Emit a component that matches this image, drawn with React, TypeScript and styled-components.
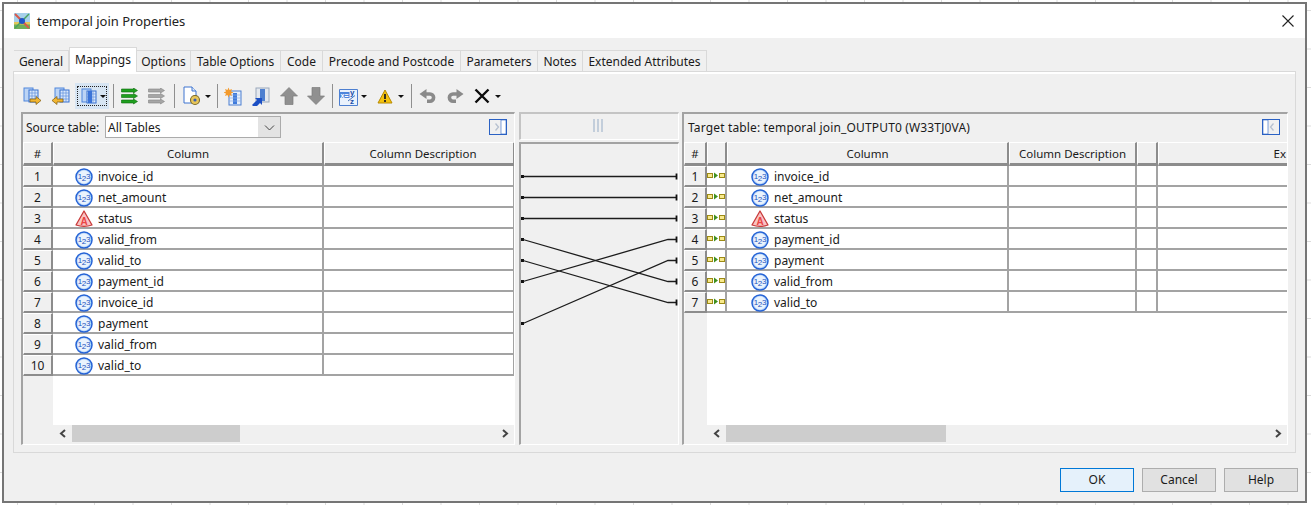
import React from "react"
import styled, { createGlobalStyle } from "styled-components"

const GlobalStyle = createGlobalStyle`
    html, body {
        margin: 0;
        padding: 0;
        background: #fff;
    }
    body {
        font-family: "Noto Sans", "Open Sans", "Liberation Sans", sans-serif;
        font-size: 12px;
        color: #1a1a1a;
        overflow: hidden;
    }
`

const Page = styled.div`
    width: 1311px;
    height: 505px;
    padding: 2px 4px 2px 2px;
    box-sizing: border-box;
    background-color: #fff;
    background-image:
        linear-gradient(to right, #dcdcdc 1px, transparent 1px),
        linear-gradient(to bottom, #dcdcdc 1px, transparent 1px);
    background-size: 38.5px 38.5px;
    background-position: 17px 10px;
`

const Dialog = styled.div`
    height: 100%;
    box-sizing: border-box;
    border: 2px solid #757575;
    display: flex;
    flex-direction: column;
    background: #f0f0f0;
`

const TitleBar = styled.div`
    height: 34px;
    background: #fff;
    display: flex;
    align-items: center;
    padding: 0 11px 0 10px;
    gap: 7px;
    flex: none;
`

const TitleText = styled.div`
    font-size: 13px;
    color: #222;
    flex: 1;
    padding-bottom: 1px;
`

const Body = styled.div`
    flex: 1;
    display: flex;
    flex-direction: column;
    padding: 9px 9px 0;
`

const TabStrip = styled.div`
    display: flex;
    align-items: flex-end;
    height: 24px;
    padding-left: 1px;
`

const Tab = styled.div<{ $active?: boolean; $w: number }>`
    width: ${(p) => p.$w}px;
    box-sizing: border-box;
    height: ${(p) => (p.$active ? 25 : 21)}px;
    margin-bottom: ${(p) => (p.$active ? -1 : 0)}px;
    padding-top: ${(p) => (p.$active ? 4 : 3)}px;
    text-align: center;
    background: ${(p) => (p.$active ? "#fff" : "#f0f0f0")};
    border: 1px solid #d9d9d9;
    border-bottom: none;
    border-left-width: ${(p) => (p.$active ? 1 : 0)}px;
    position: relative;
    z-index: ${(p) => (p.$active ? 1 : 0)};
    font-size: 12px;
    line-height: 16px;
    white-space: nowrap;
`

const TabPanel = styled.div`
    width: 1283px;
    height: 382px;
    box-sizing: border-box;
    border: 1px solid #d9d9d9;
    box-shadow: inset 0 2px 0 #fff;
    padding: 0 7px 7px;
    display: flex;
    flex-direction: column;
`

const Toolbar = styled.div`
    flex: none;
    height: 40px;
    box-sizing: border-box;
    padding-top: 8px;
    display: flex;
    align-items: center;
`

const Tool = styled.div<{ $w: number; $selected?: boolean; $l?: number }>`
    width: ${(p) => p.$w}px;
    height: 26px;
    margin-left: ${(p) => p.$l ?? 0}px;
    flex: none;
    display: flex;
    align-items: center;
    justify-content: center;
    box-sizing: border-box;
    background: ${(p) => (p.$selected ? "#d7e5f3" : "transparent")};
`

const ToolFocus = styled.div`
    width: 30px;
    height: 20px;
    border: 1px dotted #222;
    display: flex;
    align-items: center;
    gap: 3px;
    padding-left: 3px;
    box-sizing: border-box;
`

const Sep = styled.div<{ $l: number; $r: number }>`
    width: 1px;
    height: 24px;
    flex: none;
    background: #8f8f8f;
    margin: 0 ${(p) => p.$r}px 0 ${(p) => p.$l}px;
`

const Caret = styled.div`
    width: 0;
    height: 0;
    flex: none;
    border-left: 3px solid transparent;
    border-right: 3px solid transparent;
    border-top: 3px solid #111;
`

const Panes = styled.div`
    flex: 1;
    min-height: 0;
    display: flex;
    height: 333px;
`

const Pane = styled.div<{ $w: number; $r: number }>`
    width: ${(p) => p.$w}px;
    margin-right: ${(p) => p.$r}px;
    flex: none;
    box-sizing: border-box;
    border-top: 2px solid #a3a3a3;
    border-left: 2px solid #a3a3a3;
    border-right: 1px solid #fff;
    border-bottom: 1px solid #fff;
    display: flex;
    flex-direction: column;
    overflow: hidden;
`

const PaneHead = styled.div`
    height: 28px;
    flex: none;
    display: flex;
    align-items: center;
    padding: 0 7px 2px 3px;
    box-sizing: border-box;
`

const HeadLabel = styled.span`
    width: 79px;
    flex: none;
    padding-top: 1px;
    white-space: nowrap;
`

const TargetLabel = styled.span`
    flex: 1;
    padding-left: 1px;
    letter-spacing: 0.15px;
    white-space: nowrap;
`

const SelectBox = styled.div`
    width: 176px;
    height: 22px;
    box-sizing: border-box;
    background: #e3e3e3;
    border: 1px solid #ababab;
    display: flex;
    align-items: center;
    margin-right: auto;
`

const SelectValue = styled.div`
    width: 152px;
    height: 20px;
    line-height: 21px;
    background: #fff;
    padding-left: 2px;
    box-sizing: border-box;
`

const SelectArrow = styled.div`
    flex: 1;
    display: flex;
    justify-content: center;
`

const Table = styled.div`
    flex: 1;
    min-height: 0;
    display: flex;
    flex-direction: column;
`

const Row = styled.div<{ $cols: string; $h: number }>`
    display: grid;
    grid-template-columns: ${(p) => p.$cols};
    grid-template-rows: ${(p) => p.$h}px;
    height: ${(p) => p.$h}px;
    flex: none;
`

const HeadCell = styled.div<{ $shift?: number }>`
    box-sizing: border-box;
    background: #f0f0f0;
    border-top: 1px solid #fff;
    border-left: 1px solid #fff;
    border-right: 2px solid #8c8c8c;
    border-bottom: 3px solid #8c8c8c;
    padding-left: ${(p) => p.$shift ?? 0}px;
    text-align: center;
    font-size: 11.5px;
    line-height: 22px;
    white-space: nowrap;
    overflow: hidden;
`

const EndHeadCell = styled(HeadCell)`
    border-right: none;
    text-align: right;
    padding-right: 1px;
`

const NumCell = styled.div`
    box-sizing: border-box;
    background: #f0f0f0;
    border-top: 1px solid #fff;
    border-left: 1px solid #fff;
    border-right: 2px solid #8c8c8c;
    border-bottom: 2px solid #8c8c8c;
    text-align: center;
    line-height: 19px;
`

const Cell = styled.div`
    box-sizing: border-box;
    background: #fff;
    border-right: 2px solid #a3a3a3;
    border-bottom: 2px solid #a3a3a3;
`

const EndCell = styled(Cell)`
    border-right: none;
`

const NameCell = styled(Cell)<{ $pad: number }>`
    display: flex;
    align-items: center;
    gap: 5px;
    padding-left: ${(p) => p.$pad}px;
    padding-top: 2px;
`

const MarkerCell = styled(Cell)`
    display: flex;
    align-items: center;
    padding-top: 1px;
`

const RowsArea = styled.div<{ $gutter: number }>`
    flex: 1;
    min-height: 0;
    background: linear-gradient(to right, #f0f0f0 ${(p) => p.$gutter}px, #fff ${(p) => p.$gutter}px);
    display: flex;
    flex-direction: column;
`

const ScrollBar = styled.div<{ $gutter: number }>`
    height: 17px;
    flex: none;
    display: flex;
    align-items: center;
    padding-left: ${(p) => p.$gutter}px;
    margin-bottom: 2px;
`

const ScrollBtn = styled.div`
    width: 19px;
    flex: none;
    display: flex;
    justify-content: center;
`

const ScrollThumb = styled.div<{ $w: number }>`
    width: ${(p) => p.$w}px;
    height: 17px;
    background: #cdcdcd;
    flex: none;
`

const ScrollTrack = styled.div`
    flex: 1;
`

const MidColumn = styled.div`
    width: 160px;
    margin-right: 3px;
    flex: none;
    display: flex;
    flex-direction: column;
    gap: 2px;
`

const MidTop = styled.div`
    height: 28px;
    box-sizing: border-box;
    border-top: 2px solid #c4c4c4;
    border-left: 2px solid #c4c4c4;
    border-right: 1px solid #fff;
    border-bottom: 1px solid #fff;
    display: flex;
    align-items: center;
    justify-content: center;
    gap: 2px;
    padding-right: 4px;
    padding-bottom: 3px;
`

const Grip = styled.div`
    width: 2px;
    height: 13px;
    background: #c3cedb;
`

const MidBody = styled.div`
    flex: 1;
    box-sizing: border-box;
    border-top: 2px solid #a3a3a3;
    border-left: 2px solid #a3a3a3;
    border-right: 1px solid #fff;
    border-bottom: 1px solid #fff;
`

const Links = styled.svg`
    display: block;
`

const Footer = styled.div`
    flex: 1;
    display: flex;
    justify-content: flex-end;
    align-items: flex-start;
    gap: 8px;
    padding-top: 15px;
    margin-right: -2px;
`

const DialogButton = styled.div<{ $primary?: boolean }>`
    width: 74px;
    height: 24px;
    box-sizing: border-box;
    background: ${(p) => (p.$primary ? "#e5f1fb" : "#e1e1e1")};
    border: 1px solid ${(p) => (p.$primary ? "#0078d7" : "#adadad")};
    text-align: center;
    line-height: 21px;
`

const NumberIcon = () => (
    <svg width="18" height="18" viewBox="0 0 18 18">
        <circle cx="9" cy="9" r="8" fill="#b9d5f8" stroke="#2563d6" strokeWidth="1.500" />
        <circle cx="9" cy="9" r="6.400" fill="#eaf3fd" />
        <g fontSize="8" fontFamily="Liberation Sans" fill="#1c52bd" textAnchor="middle">
            <text x="5" y="11">1</text>
            <text x="9" y="13">2</text>
            <text x="13.200" y="10.500">3</text>
        </g>
    </svg>
)

const StringIcon = () => (
    <svg width="18" height="18" viewBox="0 0 18 18">
        <path d="M9 1 L17 15 Q9 17.800 1 15 Z" fill="#f9c3c3" stroke="#c93a3a" strokeWidth="1.300" strokeLinejoin="round" />
        <text x="9" y="14.500" textAnchor="middle" fontSize="10" fontWeight="bold" fontFamily="Liberation Sans" fill="#ea4545">A</text>
    </svg>
)

const AppIcon = () => (
    <svg width="16" height="16" viewBox="0 0 16 16">
        <rect x="0" y="0" width="16" height="16" fill="#a6d0ea" />
        <path d="M0 11h16v5H0z" fill="#6fae5a" />
        <path d="M0 9h16v2.500H0z" fill="#e3c75a" />
        <path d="M1 1 L15 15" stroke="#d9584a" strokeWidth="2" />
        <path d="M15 1 L1 15" stroke="#4aa35c" strokeWidth="1.500" />
        <circle cx="8" cy="8" r="3" fill="#1f55c8" />
    </svg>
)

const CloseIcon = () => (
    <svg width="12" height="12" viewBox="0 0 12 12">
        <path d="M0.500 0.500 L11.500 11.500 M11.500 0.500 L0.500 11.500" stroke="#222" strokeWidth="1.100" />
    </svg>
)

const ColumnPair = () => (
    <>
        <rect x="1" y="1" width="9" height="13" fill="#bcd4f5" stroke="#4f86dc" />
        <rect x="6" y="3" width="9" height="12" fill="#dbe8fa" stroke="#3670d0" />
        <path d="M9 3v12M12 3v12M6 6h9M6 9h9M6 12h9" stroke="#5f8fdc" strokeWidth="0.700" />
    </>
)

const ArrowRightDocIcon = () => (
    <svg width="19" height="19" viewBox="0 0 19 19">
        <ColumnPair />
        <path d="M7 12h6V9.500l5 4-5 4V15H7z" fill="#f2b632" stroke="#7c5a10" strokeWidth="0.700" />
    </svg>
)

const ArrowLeftDocIcon = () => (
    <svg width="19" height="19" viewBox="0 0 19 19">
        <g transform="translate(3 0)"><ColumnPair /></g>
        <path d="M12 12H6V9.500l-5 4 5 4V15h6z" fill="#f2b632" stroke="#7c5a10" strokeWidth="0.700" />
    </svg>
)

const ColumnsIcon = () => (
    <svg width="16" height="17" viewBox="0 0 16 17">
        <ColumnPair />
        <rect x="7" y="3" width="4" height="12" fill="#3b74d8" />
    </svg>
)

const StackArrows = ({ color, edge }: { color: string; edge: string }) => (
    <svg width="17" height="17" viewBox="0 0 17 17">
        {[1, 6.5, 12].map((y) => (
            <path key={y} d={`M0.500 ${y}h12v-1l4 2.500-4 2.500v-1h-12z`} fill={color} stroke={edge} strokeWidth="0.600" />
        ))}
    </svg>
)

const DocGearIcon = () => (
    <svg width="20" height="20" viewBox="0 0 20 20">
        <path d="M2 1h8l4 4v12H2z" fill="#fff" stroke="#3f75d0" />
        <path d="M10 1v4h4" fill="#dce8f8" stroke="#3f75d0" />
        <circle cx="13" cy="14" r="4.500" fill="#e8c65a" stroke="#7a6a2a" strokeWidth="1.100" />
        <circle cx="13" cy="14" r="1.600" fill="#3b5fb0" />
    </svg>
)

const NewColumnIcon = () => (
    <svg width="19" height="19" viewBox="0 0 19 19">
        <rect x="5" y="4" width="12" height="14" fill="#e6effb" stroke="#4d7fd0" />
        <rect x="9" y="6" width="4" height="11" fill="#3f7bdc" />
        <path d="M5 8h12M5 11h12M5 14h12" stroke="#8db0e6" strokeWidth="0.700" />
        <path d="M4.500 0.500l1 2.500 2.500-1-1 2.500 2.500 1-2.500 1 1 2.500-2.500-1-1 2.500-1-2.500-2.500 1 1-2.500-2.500-1 2.500-1-1-2.500 2.500 1z" fill="#f39a2c" />
    </svg>
)

const LinkColumnIcon = () => (
    <svg width="19" height="19" viewBox="0 0 19 19">
        <rect x="5" y="1" width="13" height="14" fill="#e4e8ee" stroke="#9aa8bb" />
        <rect x="9" y="2" width="5" height="12" fill="#4d7fd0" />
        <path d="M1 18l5-5-2-2h7v7l-2-2-5 5z" fill="#1c4fc4" />
    </svg>
)

const UpIcon = () => (
    <svg width="18" height="18" viewBox="0 0 18 18">
        <path d="M9 0.500L17.500 9H13v8.500H5V9H0.500z" fill="#909090" stroke="#7d7d7d" strokeWidth="0.700" />
    </svg>
)

const DownIcon = () => (
    <svg width="18" height="18" viewBox="0 0 18 18">
        <path d="M9 17.500L17.500 9H13V0.500H5V9H0.500z" fill="#909090" stroke="#7d7d7d" strokeWidth="0.700" />
    </svg>
)

const FormulaIcon = () => (
    <svg width="19" height="19" viewBox="0 0 19 19">
        <path d="M0.500 2.500h18v16h-18z" fill="#eaf2fc" stroke="#4d7fd0" />
        <rect x="0.500" y="5" width="10" height="6" fill="#4d86dc" />
        <text x="1.500" y="10.500" fontSize="7" fontWeight="bold" fontFamily="Liberation Sans" fill="#fff">x=</text>
        <text x="11" y="7.500" fontSize="8" fontWeight="bold" fontFamily="Liberation Sans" fill="#1c4fa8">y</text>
        <text x="11" y="16.500" fontSize="8" fontWeight="bold" fontFamily="Liberation Sans" fill="#1c4fa8">z</text>
        <path d="M9 14L16 8.500" stroke="#1c4fa8" strokeWidth="0.800" />
    </svg>
)

const WarnIcon = () => (
    <svg width="16" height="15" viewBox="0 0 16 15">
        <path d="M8 1L15 14H1z" fill="#f4c20d" stroke="#b88a00" strokeLinejoin="round" />
        <path d="M8 5v5M8 11v2" stroke="#222" strokeWidth="1.800" />
    </svg>
)

const UndoIcon = ({ flip }: { flip?: boolean }) => (
    <svg width="18" height="15" viewBox="0 0 18 15">
        <g transform={flip ? "translate(18 0) scale(-1 1)" : undefined}>
            <path d="M6 5h5a3.600 3.600 0 0 1 0 7.200H8" fill="none" stroke="#8a8a8a" strokeWidth="3.600" />
            <path d="M0.500 5L7.500 0v10z" fill="#8a8a8a" />
        </g>
    </svg>
)

const DeleteIcon = () => (
    <svg width="16" height="16" viewBox="0 0 16 16">
        <path d="M1.500 1.500L14.500 14.500M14.500 1.500L1.500 14.500" stroke="#0c0c0c" strokeWidth="2.400" />
    </svg>
)

const Collapse = ({ left }: { left?: boolean }) => (
    <svg width="18" height="16" viewBox="0 0 18 16">
        <rect x="0.500" y="0.500" width="17" height="15" fill="#f0f0f0" stroke="#2b62c4" />
        <rect x={left ? 1 : 12} y="1" width="5" height="14" fill="#fff" stroke="#2b62c4" strokeWidth="0.600" />
        <path d={left ? "M11.500 4.500L8.500 8l3 3.500" : "M6.500 4.500L9.500 8l-3 3.500"} fill="none" stroke="#b6c0cf" strokeWidth="1.300" />
    </svg>
)

const Chevron = ({ dir, color = "#444" }: { dir: "left" | "right" | "down"; color?: string }) => {
    const d = dir === "left" ? "M6 1L2 4.500 6 8" : dir === "right" ? "M2 1L6 4.500 2 8" : "M1 2.500L5.500 7 10 2.500"
    const w = dir === "down" ? 11 : 8
    return (
        <svg width={w} height="9" viewBox={`0 0 ${w} 9`}>
            <path d={d} fill="none" stroke={color} strokeWidth={dir === "down" ? 1 : 2} />
        </svg>
    )
}

const Marker = () => (
    <svg width="18" height="8" viewBox="0 0 18 8">
        <rect x="0.500" y="1.500" width="5" height="4" fill="#f8e98c" stroke="#9c8a14" />
        <path d="M7 0.500L11 3.500 7 6.500z" fill="#3f8f1e" />
        <rect x="12.500" y="1.500" width="5" height="4" fill="#f8e98c" stroke="#9c8a14" />
    </svg>
)

const tabs = [
    { label: "General", w: 55 },
    { label: "Mappings", w: 68, active: true },
    { label: "Options", w: 54 },
    { label: "Table Options", w: 90 },
    { label: "Code", w: 42 },
    { label: "Precode and Postcode", w: 138 },
    { label: "Parameters", w: 77 },
    { label: "Notes", w: 45 },
    { label: "Extended Attributes", w: 124 },
]

type Col = { name: string; type?: "string" }

const sourceCols: Col[] = [
    { name: "invoice_id" },
    { name: "net_amount" },
    { name: "status", type: "string" },
    { name: "valid_from" },
    { name: "valid_to" },
    { name: "payment_id" },
    { name: "invoice_id" },
    { name: "payment" },
    { name: "valid_from" },
    { name: "valid_to" },
]

const targetCols: Col[] = [
    { name: "invoice_id" },
    { name: "net_amount" },
    { name: "status", type: "string" },
    { name: "payment_id" },
    { name: "payment" },
    { name: "valid_from" },
    { name: "valid_to" },
]

const links = [
    [176.5, 176.5],
    [197.5, 197.5],
    [218.5, 218.5],
    [239.5, 281.5],
    [260.5, 302.5],
    [281.5, 239.5],
    [323.5, 260.5],
]

const sourceGrid = "30px 271px 191px"
const targetGrid = "23px 20px 282px 128px 21px 129px"

const ColumnName: React.FC<{ col: Col; pad: number }> = ({ col, pad }) => (
    <NameCell $pad={pad}>
        {col.type === "string" ? <StringIcon /> : <NumberIcon />}
        <span>{col.name}</span>
    </NameCell>
)

export default function App() {
    return (
        <Page>
            <GlobalStyle />
            <Dialog>
                <TitleBar>
                    <AppIcon />
                    <TitleText>temporal join Properties</TitleText>
                    <CloseIcon />
                </TitleBar>
                <Body>
                    <TabStrip>
                        {tabs.map((tab) => (
                            <Tab key={tab.label} $w={tab.w} $active={tab.active}>{tab.label}</Tab>
                        ))}
                    </TabStrip>
                    <TabPanel>
                        <Toolbar>
                            <Tool $w={22}><ArrowRightDocIcon /></Tool>
                            <Tool $w={28} $l={3}><ArrowLeftDocIcon /></Tool>
                            <Tool $w={34} $l={1} $selected>
                                <ToolFocus><ColumnsIcon /><Caret /></ToolFocus>
                            </Tool>
                            <Sep $l={4} $r={1} />
                            <Tool $w={28}><StackArrows color="#1fa01f" edge="#0d6a0d" /></Tool>
                            <Tool $w={27}><StackArrows color="#a6a6a6" edge="#858585" /></Tool>
                            <Sep $l={4} $r={6} />
                            <Tool $w={22}><DocGearIcon /></Tool>
                            <Tool $w={9}><Caret /></Tool>
                            <Sep $l={5} $r={1} />
                            <Tool $w={28}><NewColumnIcon /></Tool>
                            <Tool $w={27}><LinkColumnIcon /></Tool>
                            <Tool $w={28} $l={1}><UpIcon /></Tool>
                            <Tool $w={25}><DownIcon /></Tool>
                            <Sep $l={4} $r={3} />
                            <Tool $w={24}><FormulaIcon /></Tool>
                            <Tool $w={8}><Caret /></Tool>
                            <Tool $w={22} $l={6}><WarnIcon /></Tool>
                            <Tool $w={10}><Caret /></Tool>
                            <Sep $l={5} $r={3} />
                            <Tool $w={26}><UndoIcon /></Tool>
                            <Tool $w={28}><UndoIcon flip /></Tool>
                            <Tool $w={26}><DeleteIcon /></Tool>
                            <Tool $w={6}><Caret /></Tool>
                        </Toolbar>
                        <Panes>
                            <Pane $w={494} $r={4}>
                                <PaneHead>
                                    <HeadLabel>Source table:</HeadLabel>
                                    <SelectBox>
                                        <SelectValue>All Tables</SelectValue>
                                        <SelectArrow><Chevron dir="down" /></SelectArrow>
                                    </SelectBox>
                                    <Collapse />
                                </PaneHead>
                                <Table>
                                    <Row $cols={sourceGrid} $h={24}>
                                        <HeadCell>#</HeadCell>
                                        <HeadCell>Column</HeadCell>
                                        <HeadCell $shift={8}>Column Description</HeadCell>
                                    </Row>
                                    <RowsArea $gutter={30}>
                                        {sourceCols.map((col, i) => (
                                            <Row $cols={sourceGrid} $h={21} key={i}>
                                                <NumCell>{i + 1}</NumCell>
                                                <ColumnName col={col} pad={22} />
                                                <Cell />
                                            </Row>
                                        ))}
                                    </RowsArea>
                                    <ScrollBar $gutter={30}>
                                        <ScrollBtn><Chevron dir="left" /></ScrollBtn>
                                        <ScrollThumb $w={168} />
                                        <ScrollTrack />
                                        <ScrollBtn><Chevron dir="right" /></ScrollBtn>
                                    </ScrollBar>
                                </Table>
                            </Pane>
                            <MidColumn>
                                <MidTop><Grip /><Grip /><Grip /></MidTop>
                                <MidBody>
                                    <Links width="157" height="300" viewBox="521 144 157 300">
                                        {links.map(([from, to]) => (
                                            <g key={from}>
                                                <rect x="521" y={from - 1.5} width="3" height="3" fill="#111" />
                                                <path d={`M523 ${from} L668 ${to} L676 ${to}`} fill="none" stroke="#1c1c1c" strokeWidth="1.300" />
                                                <path d={`M676.500 ${to - 3} v6`} stroke="#111" strokeWidth="1.800" />
                                            </g>
                                        ))}
                                    </Links>
                                </MidBody>
                            </MidColumn>
                            <Pane $w={606} $r={0}>
                                <PaneHead>
                                    <TargetLabel>Target table: temporal join_OUTPUT0 (W33TJ0VA)</TargetLabel>
                                    <Collapse left />
                                </PaneHead>
                                <Table>
                                    <Row $cols={targetGrid} $h={24}>
                                        <HeadCell>#</HeadCell>
                                        <HeadCell />
                                        <HeadCell>Column</HeadCell>
                                        <HeadCell>Column Description</HeadCell>
                                        <HeadCell />
                                        <EndHeadCell>Ex</EndHeadCell>
                                    </Row>
                                    <RowsArea $gutter={23}>
                                        {targetCols.map((col, i) => (
                                            <Row $cols={targetGrid} $h={21} key={i}>
                                                <NumCell>{i + 1}</NumCell>
                                                <MarkerCell><Marker /></MarkerCell>
                                                <ColumnName col={col} pad={24} />
                                                <Cell />
                                                <Cell />
                                                <EndCell />
                                            </Row>
                                        ))}
                                    </RowsArea>
                                    <ScrollBar $gutter={23}>
                                        <ScrollBtn><Chevron dir="left" /></ScrollBtn>
                                        <ScrollThumb $w={220} />
                                        <ScrollTrack />
                                        <ScrollBtn><Chevron dir="right" /></ScrollBtn>
                                    </ScrollBar>
                                </Table>
                            </Pane>
                        </Panes>
                    </TabPanel>
                    <Footer>
                        <DialogButton $primary>OK</DialogButton>
                        <DialogButton>Cancel</DialogButton>
                        <DialogButton>Help</DialogButton>
                    </Footer>
                </Body>
            </Dialog>
        </Page>
    )
}
